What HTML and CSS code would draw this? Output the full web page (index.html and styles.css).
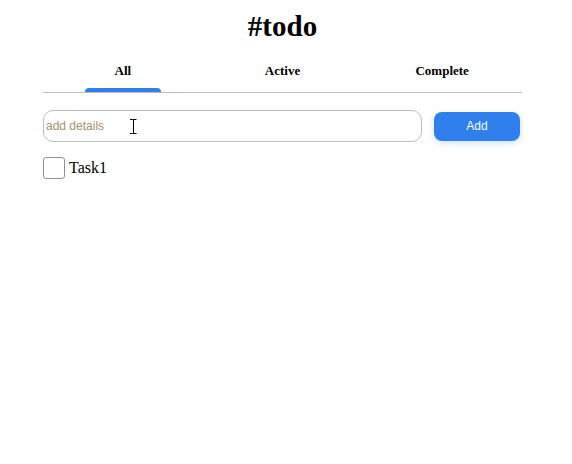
FILE: index.html
```html
<!DOCTYPE html>
<html lang="en">
<head>
<meta charset="utf-8">
<title>#todo</title>
<link rel="stylesheet" href="styles.css">
</head>
<body>
<div class="app">
  <h1 class="title">#todo</h1>
  <nav class="tabs">
    <div class="tab active"><span class="tab-label">All</span><span class="tab-indicator"></span></div>
    <div class="tab"><span class="tab-label">Active</span><span class="tab-indicator"></span></div>
    <div class="tab"><span class="tab-label">Complete</span><span class="tab-indicator"></span></div>
  </nav>
  <form class="add-row">
    <div class="input-wrap">
      <input class="details" type="text" placeholder="add details">
      <svg class="ibeam" width="9" height="15" viewBox="0 0 9 15"><path d="M1 0.5h2.5M5 0.5h2.5M4.5 1v13M1 14.5h2.5M5 14.5h2.5" stroke="#000" stroke-width="1" fill="none"/><path d="M3.5 0.5h1.5M3.5 14.5h1.5" stroke="#000" stroke-width="1"/></svg>
    </div>
    <button class="add-btn" type="button">Add</button>
  </form>
  <ul class="tasks">
    <li class="task"><input class="check" type="checkbox"><span class="task-name">Task1</span></li>
  </ul>
</div>
</body>
</html>
```
FILE: styles.css
```css
* { box-sizing: border-box; }
body {
  margin: 0;
  background: #fff;
  font-family: "Liberation Serif", "Times New Roman", serif;
  color: #000;
}
.app {
  margin-left: 43px;
  width: 479px;
}
.title {
  margin: 9px 0 0;
  font-size: 29px;
  line-height: 34px;
  font-weight: bold;
  text-align: center;
}
.tabs {
  display: flex;
  margin-top: 20px;
  border-bottom: 1px solid #bdbdbd;
}
.tab {
  flex: 1;
  display: flex;
  flex-direction: column;
  align-items: center;
}
.tab-label {
  font-size: 13px;
  line-height: 15px;
  font-weight: bold;
}
.tab-indicator {
  width: 76px;
  height: 4px;
  margin-top: 10px;
  border-radius: 4px 4px 0 0;
  background: transparent;
}
.tab.active .tab-indicator { background: #2f80ed; }
.add-row {
  display: flex;
  align-items: center;
  gap: 12px;
  margin: 17px 0 0;
}
.input-wrap {
  position: relative;
  width: 379px;
  height: 32px;
}
.details {
  width: 100%;
  height: 100%;
  margin: 0;
  border: 1px solid #bdbdbd;
  border-radius: 10px;
  padding: 0 2px;
  font-family: "Liberation Sans", Arial, sans-serif;
  font-size: 12px;
  outline: none;
}
.details::placeholder { color: #a4916f; }
.ibeam {
  position: absolute;
  left: 86px;
  top: 9px;
}
.add-btn {
  width: 86px;
  height: 29px;
  border: none;
  border-radius: 8px;
  background: #2f80ed;
  color: #fff;
  font-family: "Liberation Sans", Arial, sans-serif;
  font-size: 12px;
  box-shadow: 0 2px 6px rgba(127, 177, 243, 0.4);
  padding: 0;
}
.tasks {
  list-style: none;
  margin: 15px 0 0;
  padding: 0;
}
.task {
  display: flex;
  align-items: center;
  gap: 4px;
}
.check {
  appearance: none;
  -webkit-appearance: none;
  margin: 0;
  width: 22px;
  height: 22px;
  border: 1px solid #8f8f8f;
  border-radius: 3px;
  background: #fff;
}
.task-name {
  font-size: 16px;
  line-height: 18px;
}
```
